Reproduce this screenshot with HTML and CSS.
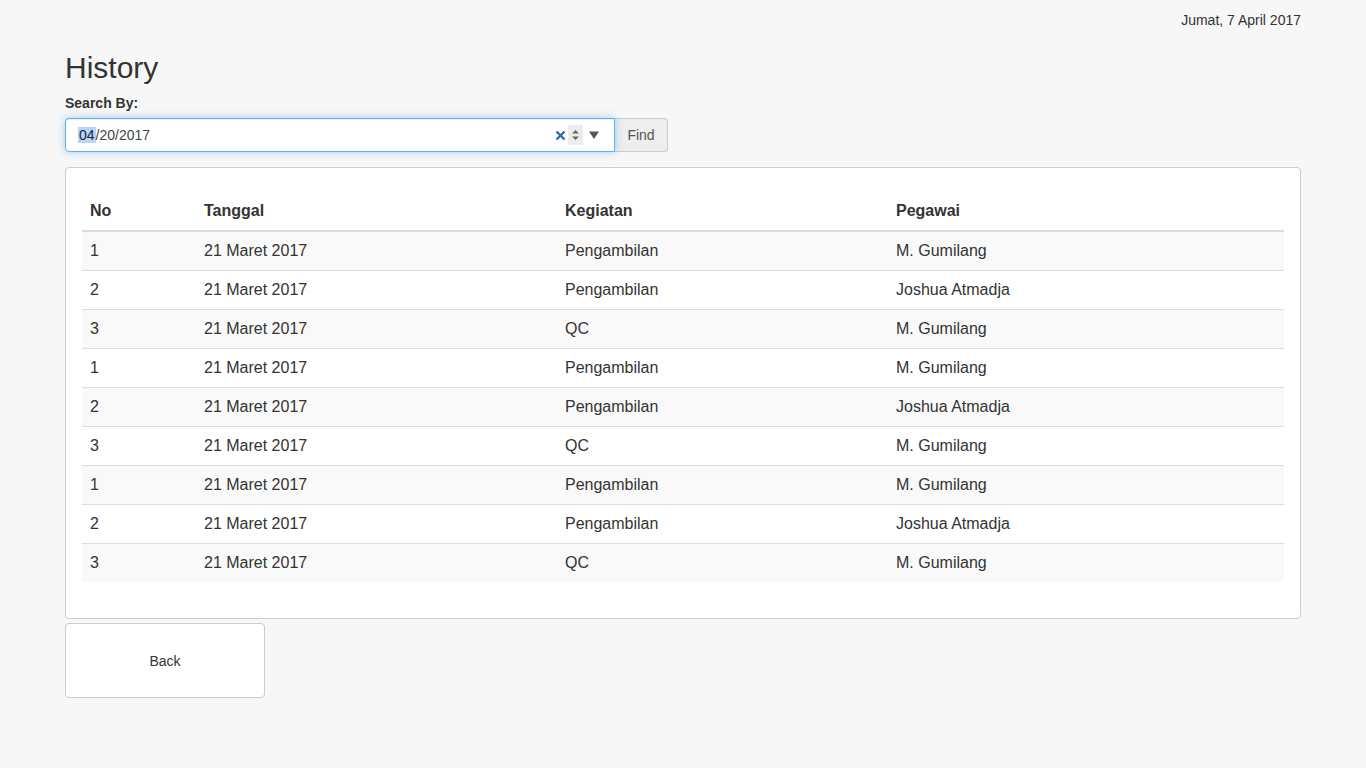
FILE: index.html
```html
<!DOCTYPE html>
<html lang="id">
<head>
<meta charset="utf-8">
<title>History</title>
<link rel="stylesheet" href="styles.css">
</head>
<body>
<div class="page">
  <div class="topbar">Jumat, 7 April 2017</div>
  <h1 class="title">History</h1>
  <label class="search-label">Search By:</label>
  <div class="search-row">
    <div class="date-input">
      <span class="date-text"><span class="sel">04</span>/20/2017</span>
      <span class="controls">
        <svg class="clear" width="11" height="11" viewBox="0 0 11 11"><path d="M1.5 1.5 L9.5 9.5 M9.5 1.5 L1.5 9.5" stroke="#3367b3" stroke-width="2.4" stroke-linecap="butt"/></svg>
        <span class="spin">
          <svg width="15" height="20" viewBox="0 0 15 20"><path d="M4 8.5 L7.5 5 L11 8.5 Z" fill="#666"/><path d="M4 11.5 L7.5 15 L11 11.5 Z" fill="#666"/></svg>
        </span>
        <svg class="drop" width="12" height="10" viewBox="0 0 12 10"><path d="M1 1.5 L11 1.5 L6 9 Z" fill="#555"/></svg>
      </span>
    </div>
    <button class="find-btn">Find</button>
  </div>
  <div class="panel">
    <table class="history-table">
      <thead>
        <tr><th class="c-no">No</th><th class="c-tgl">Tanggal</th><th class="c-keg">Kegiatan</th><th class="c-peg">Pegawai</th></tr>
      </thead>
      <tbody>
        <tr><td>1</td><td>21 Maret 2017</td><td>Pengambilan</td><td>M. Gumilang</td></tr>
        <tr><td>2</td><td>21 Maret 2017</td><td>Pengambilan</td><td>Joshua Atmadja</td></tr>
        <tr><td>3</td><td>21 Maret 2017</td><td>QC</td><td>M. Gumilang</td></tr>
        <tr><td>1</td><td>21 Maret 2017</td><td>Pengambilan</td><td>M. Gumilang</td></tr>
        <tr><td>2</td><td>21 Maret 2017</td><td>Pengambilan</td><td>Joshua Atmadja</td></tr>
        <tr><td>3</td><td>21 Maret 2017</td><td>QC</td><td>M. Gumilang</td></tr>
        <tr><td>1</td><td>21 Maret 2017</td><td>Pengambilan</td><td>M. Gumilang</td></tr>
        <tr><td>2</td><td>21 Maret 2017</td><td>Pengambilan</td><td>Joshua Atmadja</td></tr>
        <tr><td>3</td><td>21 Maret 2017</td><td>QC</td><td>M. Gumilang</td></tr>
      </tbody>
    </table>
  </div>
  <button class="back-btn">Back</button>
</div>
</body>
</html>
```

FILE: styles.css
```css
* { box-sizing: border-box; }
html, body {
  margin: 0;
  padding: 0;
  background: #f7f7f7;
  font-family: "Liberation Sans", Arial, Helvetica, sans-serif;
  color: #333;
  font-size: 14px;
  line-height: 20px;
}
.page {
  width: 1236px;
  margin-left: 65px;
  display: flex;
  flex-direction: column;
  align-items: flex-start;
}
.topbar {
  align-self: flex-end;
  padding-top: 10px;
  height: 29px;
  font-size: 14px;
  line-height: 20px;
  color: #333;
}
.title {
  margin: 22px 0 0 0;
  font-size: 30px;
  font-weight: 400;
  line-height: 34px;
  color: #333;
}
.search-label {
  margin-top: 8px;
  font-weight: 700;
  font-size: 14px;
  line-height: 20px;
  margin-bottom: 5px;
}
.search-row {
  display: flex;
  height: 34px;
}
.date-input {
  width: 550px;
  height: 34px;
  background: #fff;
  border: 1px solid #66afe9;
  border-radius: 4px 0 0 4px;
  box-shadow: inset 0 1px 1px rgba(0,0,0,.075), 0 0 8px rgba(102,175,233,.6);
  display: flex;
  align-items: center;
  justify-content: space-between;
  padding: 0 14px 0 12px;
  position: relative;
  z-index: 1;
}
.date-text {
  font-size: 14px;
  color: #444;
  line-height: 17px;
  padding-left: 1px;
}
.sel {
  background: #b4d5fe;
  color: #222;
  padding: 0 1px 0 1px;
  margin-left: -1px;
}
.controls {
  display: flex;
  align-items: center;
}
.clear { margin-right: 2px; }
.spin {
  width: 15px;
  height: 20px;
  background: #ececec;
  display: flex;
  align-items: center;
  margin-right: 5px;
}
.find-btn {
  width: 53px;
  height: 34px;
  border: 1px solid #ccc;
  border-left: none;
  border-radius: 0 4px 4px 0;
  background: #eee;
  color: #555;
  font-family: inherit;
  font-size: 14px;
  padding: 0;
  margin: 0;
}
.panel {
  margin-top: 15px;
  width: 1236px;
  background: #fff;
  border: 1px solid #ccc;
  border-radius: 4px;
  padding: 24px 16px 36px 16px;
}
.history-table {
  width: 100%;
  border-collapse: collapse;
  border-spacing: 0;
  font-size: 16px;
  line-height: 22px;
  color: #333;
}
.history-table th {
  text-align: left;
  font-weight: 700;
  padding: 8px;
  border-bottom: 2px solid #ddd;
}
.history-table td {
  padding: 8px;
  border-top: 1px solid #ddd;
}
.history-table tbody tr:first-child td { border-top: none; }
.history-table tbody tr:nth-child(odd) { background: #f9f9f9; }
.c-no { width: 114px; }
.c-tgl { width: 361px; }
.c-keg { width: 331px; }
.back-btn {
  margin-top: 4px;
  width: 200px;
  height: 75px;
  background: #fff;
  border: 1px solid #ccc;
  border-radius: 4px;
  font-family: inherit;
  font-size: 14px;
  color: #333;
  padding: 0;
}
```
